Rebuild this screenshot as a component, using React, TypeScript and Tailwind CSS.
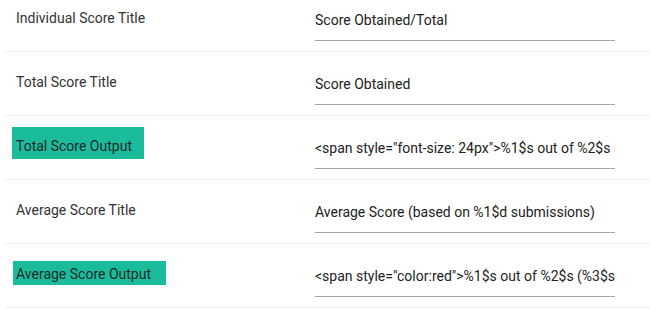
const rows = [
  { label: "Individual Score Title", value: "Score Obtained/Total" },
  { label: "Total Score Title", value: "Score Obtained" },
  {
    label: "Total Score Output",
    value: '<span style="font-size: 24px">%1$s out of %2$s (%3$s%)</span>',
    mark: "tall",
  },
  { label: "Average Score Title", value: "Average Score (based on %1$d submissions)" },
  {
    label: "Average Score Output",
    value: '<span style="color:red">%1$s out of %2$s (%3$s%)</span>',
    mark: "short",
  },
];

const Label = ({ text, mark }: { text: string; mark?: string }) => {
  if (mark === "tall") {
    return (
      <span className="-ml-1 -mt-[10px] inline-block w-[132px] bg-[#1bbc9b] pb-1 pl-1 pt-[10px] text-[#1d2b28]">
        {text}
      </span>
    );
  }
  if (mark === "short") {
    return (
      <span className="-ml-[3px] -mt-1 inline-block w-[153px] bg-[#1bbc9b] pb-[2px] pl-[3px] pt-1 text-[#1d2b28]">
        {text}
      </span>
    );
  }
  return <span>{text}</span>;
};

export default function App() {
  return (
    <div className="h-[309px] w-[650px] overflow-hidden bg-white font-['Roboto',sans-serif] text-[14px] leading-[18px]">
      <div className="-mt-3 pl-[5px]">
        {rows.map((row) => (
          <div key={row.label} className="flex h-16 border-b border-[#efefef]">
            <div className="w-[310px] shrink-0 pl-[11px] pt-[21px] text-[#333333]">
              <Label text={row.label} mark={row.mark} />
            </div>
            <div className="pt-[23px]">
              <div className="w-[300px] overflow-hidden whitespace-nowrap border-b border-[#a3a3a3] pb-[11px] text-[#222222]">
                {row.value}
              </div>
            </div>
          </div>
        ))}
      </div>
    </div>
  );
}
